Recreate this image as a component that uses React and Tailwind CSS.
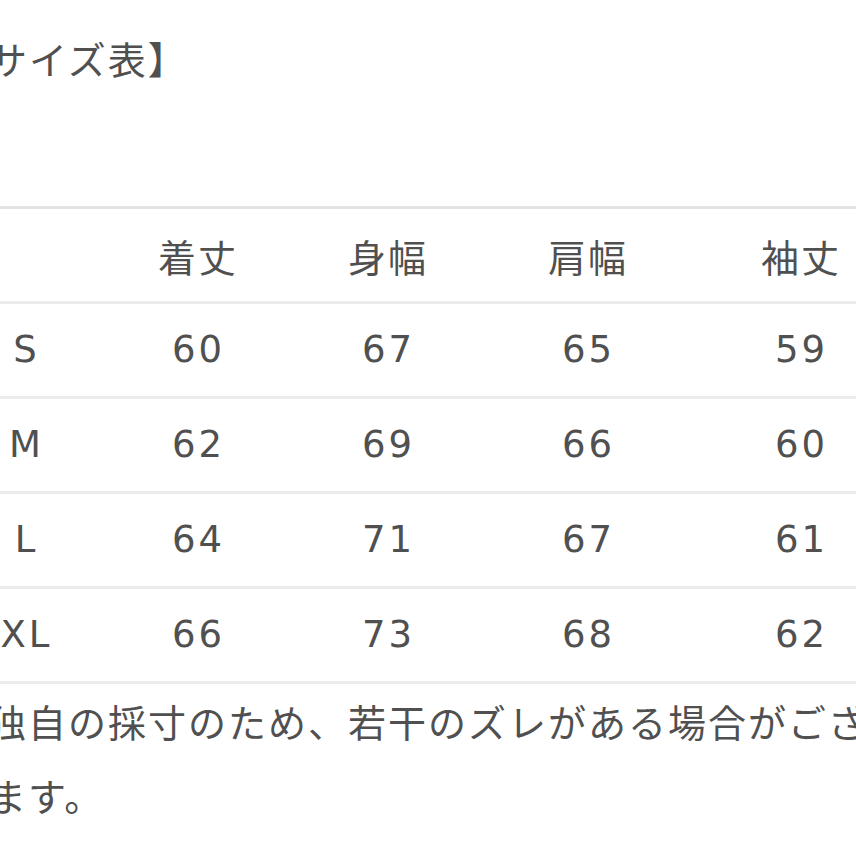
const headers = ['', '着丈', '身幅', '肩幅', '袖丈'];

const rows = [
  ['S', '60', '67', '65', '59'],
  ['M', '62', '69', '66', '60'],
  ['L', '64', '71', '67', '61'],
  ['XL', '66', '73', '68', '62'],
];

const cjk = { fontFamily: '"Noto Sans CJK JP", "Noto Sans", sans-serif' };
const latin = { fontFamily: '"DejaVu Sans", "Noto Sans", sans-serif' };

function Row({ cells, head }) {
  return (
    <div className="grid grid-cols-[170px_174px_206px_194px_232px] h-[95px] items-center border-b-[3px] border-[#ebebeb]">
      {cells.map((c, i) => (
        <div
          key={i}
          style={head ? cjk : latin}
          className={
            head
              ? 'text-center text-[38px] tracking-[2px] pl-[2px]'
              : 'text-center text-[37px] tracking-[3px] pl-[3px]'
          }
        >
          {c}
        </div>
      ))}
    </div>
  );
}

export default function App() {
  return (
    <div className="w-[856px] h-[856px] overflow-hidden bg-white text-[#505050]" style={cjk}>
      <div className="pt-[21px] -ml-[51px] text-[38px] leading-[74px] tracking-[2px] whitespace-nowrap">
        【サイズ表】
      </div>

      <div className="mt-[111px] -ml-[60px] w-[916px] border-t-[3px] border-[#e3e3e3]">
        <Row cells={headers} head />
        {rows.map((r) => (
          <Row key={r[0]} cells={r} />
        ))}
      </div>

      <div className="-ml-[12px] text-[38px] leading-[74px] tracking-[2px] whitespace-nowrap">
        <div>独自の採寸のため、若干のズレがある場合がござい</div>
        <div>ます。</div>
      </div>
    </div>
  );
}
